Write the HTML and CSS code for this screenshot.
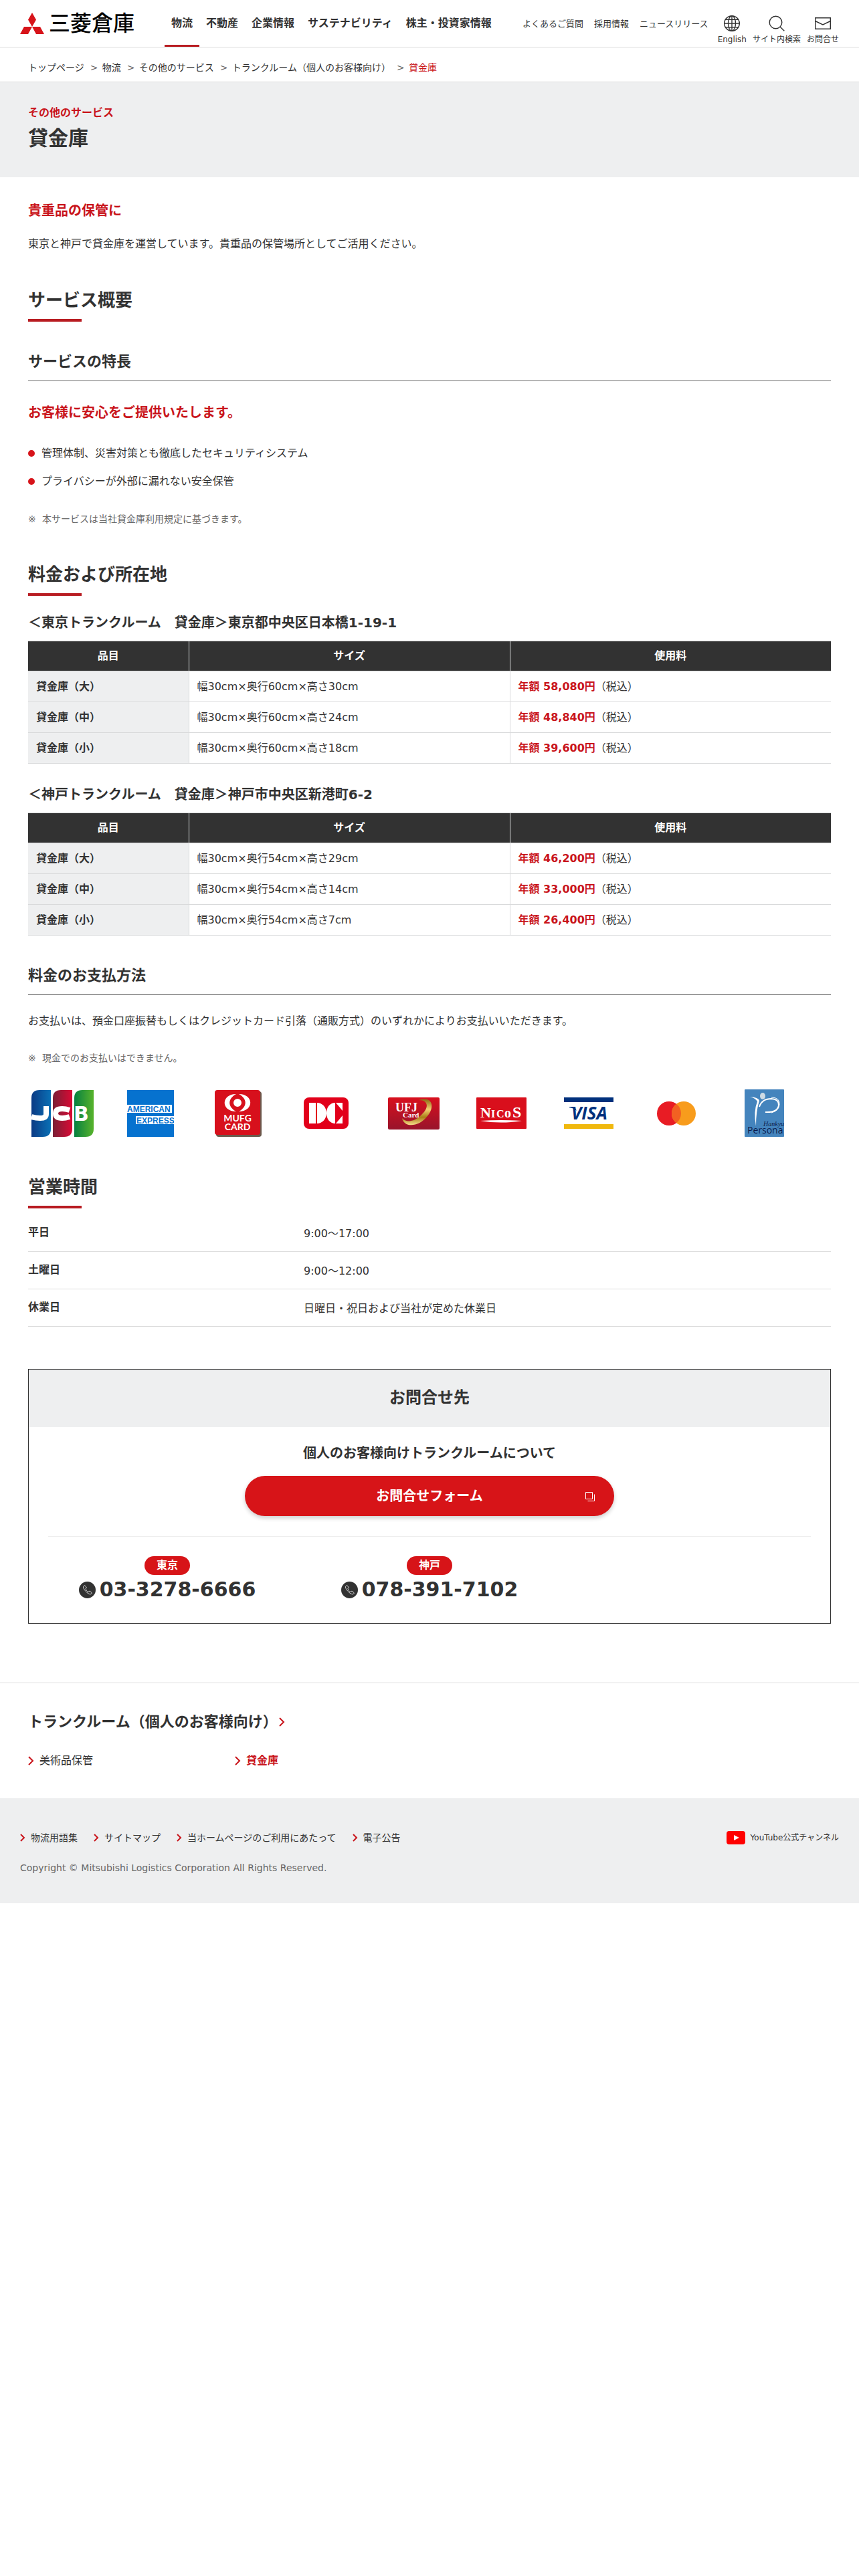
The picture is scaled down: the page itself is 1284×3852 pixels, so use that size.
FILE: index.html
```
<!DOCTYPE html>
<html lang="ja">

<head>
    <meta charset="UTF-8">
    <meta name="viewport" content="width=device-width, initial-scale=1.0">
    <title>貸金庫 | 三菱倉庫</title>
    <link rel="stylesheet" href="styles.css">
</head>

<body>
<header class="header">
    <a class="logo" href="#">
        <svg width="36" height="32" viewBox="0 0 36 32" aria-hidden="true">
            <path fill="#d7141a" d="M18 0l6 10.500-6 10.500-6-10.500zM6 21h12l-6 11H0zM18 21h12l6 11H24z"/>
        </svg>
        <span>三菱倉庫</span>
    </a>
    <nav class="main-nav">
        <a class="active" href="#">物流</a>
        <a href="#">不動産</a>
        <a href="#">企業情報</a>
        <a href="#">サステナビリティ</a>
        <a href="#">株主・投資家情報</a>
    </nav>
    <div class="header-side">
        <nav class="sub-nav">
            <a href="#">よくあるご質問</a>
            <a href="#">採用情報</a>
            <a href="#">ニュースリリース</a>
        </nav>
        <div class="tools">
            <a href="#">
                <svg class="line-icon" width="24" height="24" viewBox="0 0 24 24" aria-hidden="true">
                    <circle cx="12" cy="12" r="11.300"/>
                    <ellipse cx="12" cy="12" rx="5.500" ry="11.300"/>
                    <path d="M12 .7v22.600M.7 12h22.600M2.500 6.200h19M2.500 17.800h19"/>
                </svg>
                English
            </a>
            <a href="#">
                <svg class="line-icon" width="24" height="24" viewBox="0 0 24 24" aria-hidden="true">
                    <circle cx="10.500" cy="10.500" r="9.300"/>
                    <path d="M17 17l6.300 6.300"/>
                </svg>
                サイト内検索
            </a>
            <a href="#">
                <svg class="line-icon" width="24" height="24" viewBox="0 0 24 24" aria-hidden="true">
                    <path d="M.7 3.700h22.600v16.600H.7zM.7 8.500L12 14l11.300-5.500"/>
                </svg>
                お問合せ
            </a>
        </div>
    </div>
</header>

<nav class="breadcrumb">
    <a href="#">トップページ</a>
    <a href="#">物流</a>
    <a href="#">その他のサービス</a>
    <a href="#">トランクルーム（個人のお客様向け）</a>
    <span class="current">貸金庫</span>
</nav>

<div class="page-title">
    <p>その他のサービス</p>
    <h1>貸金庫</h1>
</div>

<main class="main">
    <p class="lead">貴重品の保管に</p>
    <p class="intro">東京と神戸で貸金庫を運営しています。貴重品の保管場所としてご活用ください。</p>

    <h2>サービス概要</h2>
    <h3>サービスの特長</h3>
    <p class="lead feature">お客様に安心をご提供いたします。</p>
    <ul class="bullets">
        <li>管理体制、災害対策とも徹底したセキュリティシステム</li>
        <li>プライバシーが外部に漏れない安全保管</li>
    </ul>
    <p class="note"><span>※</span>本サービスは当社貸金庫利用規定に基づきます。</p>

    <h2>料金および所在地</h2>
    <h4>＜東京トランクルーム　貸金庫＞東京都中央区日本橋1-19-1</h4>
    <table class="price">
        <thead>
        <tr><th>品目</th><th>サイズ</th><th>使用料</th></tr>
        </thead>
        <tbody>
        <tr><th>貸金庫（大）</th><td>幅30cm×奥行60cm×高さ30cm</td><td><b>年額 58,080円</b>（税込）</td></tr>
        <tr><th>貸金庫（中）</th><td>幅30cm×奥行60cm×高さ24cm</td><td><b>年額 48,840円</b>（税込）</td></tr>
        <tr><th>貸金庫（小）</th><td>幅30cm×奥行60cm×高さ18cm</td><td><b>年額 39,600円</b>（税込）</td></tr>
        </tbody>
    </table>

    <h4>＜神戸トランクルーム　貸金庫＞神戸市中央区新港町6-2</h4>
    <table class="price">
        <thead>
        <tr><th>品目</th><th>サイズ</th><th>使用料</th></tr>
        </thead>
        <tbody>
        <tr><th>貸金庫（大）</th><td>幅30cm×奥行54cm×高さ29cm</td><td><b>年額 46,200円</b>（税込）</td></tr>
        <tr><th>貸金庫（中）</th><td>幅30cm×奥行54cm×高さ14cm</td><td><b>年額 33,000円</b>（税込）</td></tr>
        <tr><th>貸金庫（小）</th><td>幅30cm×奥行54cm×高さ7cm</td><td><b>年額 26,400円</b>（税込）</td></tr>
        </tbody>
    </table>

    <h3>料金のお支払方法</h3>
    <p class="payment">お支払いは、預金口座振替もしくはクレジットカード引落（通販方式）のいずれかによりお支払いいただきます。</p>
    <p class="note"><span>※</span>現金でのお支払いはできません。</p>

    <ul class="cards">
        <li>
            <!-- JCB -->
            <svg width="94" height="70" viewBox="0 0 94 70">
                <defs>
                    <linearGradient id="jcb-blue"><stop offset="0" stop-color="#0b3a84"/><stop offset="1" stop-color="#0a70b5"/></linearGradient>
                    <linearGradient id="jcb-red"><stop offset="0" stop-color="#7a1f35"/><stop offset="1" stop-color="#d90a35"/></linearGradient>
                    <linearGradient id="jcb-green"><stop offset="0" stop-color="#068040"/><stop offset="1" stop-color="#58b32c"/></linearGradient>
                </defs>
                <path fill="url(#jcb-blue)" d="M12 0h17v58q0 12-12 12H0V12Q0 0 12 0z"/>
                <path fill="url(#jcb-red)" d="M44 0h17v58q0 12-12 12H32V12Q32 0 44 0z"/>
                <path fill="url(#jcb-green)" d="M76 0h17v58q0 12-12 12H64V12Q64 0 76 0z"/>
                <path fill="none" stroke="#fff" stroke-width="8" d="M22 24v12q0 6-9 6-7 0-13-2"/>
                <path fill="none" stroke="#fff" stroke-width="8" d="M57 30q-6-2-11-2-10 0-10 7t10 7q5 0 11-2"/>
                <text x="63" y="46" font-size="30" font-weight="bold" fill="#fff">B</text>
            </svg>
        </li>
        <li>
            <!-- American Express -->
            <svg width="70" height="70" viewBox="0 0 70 70">
                <path fill="#0672cf" d="M0 0h70v70H0z"/>
                <path fill="#fff" d="M0 22h67v12H0zM13 39h57v12H13z"/>
                <text class="amex" x="0" y="33" font-size="12">AMERICAN</text>
                <text class="amex" x="14" y="50" font-size="12">EXPRESS</text>
            </svg>
        </li>
        <li>
            <!-- MUFG CARD -->
            <svg width="70" height="70" viewBox="0 0 70 70">
                <rect x="2" y="2" width="68" height="68" rx="4" fill="#6b5a4d"/>
                <rect width="68" height="67" rx="4" fill="#d7101c"/>
                <path fill="#fff" d="M32 6C9 6 9 32 32 32 19 25 19 13 32 6zM36 6c23 0 23 26 0 26 13-7 13-19 0-26z"/>
                <circle cx="34" cy="19" r="6" fill="#fff"/>
                <g fill="#fff" font-family="Lato" font-weight="bold" font-size="14" text-anchor="middle">
                    <text x="34" y="47">MUFG</text>
                    <text x="34" y="60">CARD</text>
                </g>
            </svg>
        </li>
        <li>
            <!-- DC -->
            <svg width="67" height="47" viewBox="0 0 67 47">
                <rect width="67" height="47" rx="8" fill="#e2001a"/>
                <path fill="#fff" d="M8 8h10v31H8zM20 8c8 0 14 7 14 15.500S28 39 20 39zM58 8v12L48 8zM58 39V27L48 39zM47 8v31c-8 0-13-7-13-15.500S39 8 47 8z"/>
            </svg>
        </li>
        <li>
            <!-- UFJ Card -->
            <svg width="77" height="48" viewBox="0 0 77 48">
                <defs>
                    <linearGradient id="ufj-bg" x2="0" y2="1"><stop offset="0" stop-color="#d8101e"/><stop offset="1" stop-color="#98142b"/></linearGradient>
                    <linearGradient id="ufj-gold" x2="0" y2="1"><stop offset="0" stop-color="#8d6712"/><stop offset=".4" stop-color="#f3cf72"/><stop offset=".7" stop-color="#a97c16"/><stop offset="1" stop-color="#f7dc8a"/></linearGradient>
                </defs>
                <rect width="77" height="48" rx="2" fill="url(#ufj-bg)"/>
                <path fill="url(#ufj-gold)" d="M46 4c22-7 24 12 12 25-12 15-34 17-37 2 6 7 18 6 29-5C62 15 60 4 46 4z"/>
                <text x="11" y="21" font-family="Liberation Serif" font-size="18" font-weight="bold" fill="#fff">UFJ</text>
                <text x="22" y="30" font-family="Liberation Serif" font-size="11" font-weight="bold" fill="#fff">Card</text>
            </svg>
        </li>
        <li>
            <!-- NICOS -->
            <svg width="75" height="47" viewBox="0 0 75 47">
                <rect width="75" height="47" rx="1" fill="#d90f1c"/>
                <g fill="#fff" font-family="Liberation Serif" font-weight="bold">
                    <text x="6" y="30" font-size="22">N</text>
                    <text x="22 30 42" y="30" font-size="16">IC<tspan font-size="20">o</tspan></text>
                    <text x="54" y="30" font-size="24">S</text>
                </g>
                <path fill="#fff" d="M6 35q31-2 62 0-31 5-62 0z"/>
            </svg>
        </li>
        <li>
            <!-- VISA -->
            <svg width="74" height="47" viewBox="0 0 74 47">
                <path fill="#00307c" d="M0 0h74v7H0z"/>
                <path fill="#f0b80e" d="M0 40h74v7H0z"/>
                <text x="11" y="33" font-family="Open Sans" font-size="26" font-weight="bold" font-style="italic" fill="#00307c">VISA</text>
                <path fill="#00307c" d="M8 14h8l3 6q-4-4-11-5z"/>
            </svg>
        </li>
        <li>
            <!-- Mastercard -->
            <svg width="58" height="36" viewBox="0 0 58 36">
                <circle cx="18" cy="18" r="18" fill="#e81c24"/>
                <circle cx="40" cy="18" r="18" fill="#f89c1c"/>
                <path fill="#f26122" d="M29 3.750a18 18 0 0 1 0 28.500 18 18 0 0 1 0-28.500z"/>
            </svg>
        </li>
        <li>
            <!-- Hankyu Persona -->
            <svg width="59" height="71" viewBox="0 0 59 71">
                <rect width="59" height="71" rx="1" fill="#4484bd"/>
                <ellipse cx="27" cy="10" rx="4" ry="5" fill="#cfdbe4"/>
                <path fill="#fff" d="M8 11q13 1 14 6-5 15-5 38-4-22 2-37-3-5-11-7z"/>
                <path fill="none" stroke="#fff" stroke-width="2" d="M22 26q4-12 18-12 12 1 11 10-2 11-20 10"/>
                <path fill="none" stroke="#fff" d="M40 12q13 0 12 11-1 9-12 12"/>
                <g fill="#0b1c4d">
                    <text x="28" y="55" font-size="10" font-style="italic" font-family="Liberation Serif">Hankyu</text>
                    <text x="4" y="66" font-size="14" font-family="Open Sans">Persona</text>
                </g>
            </svg>
        </li>
    </ul>

    <h2>営業時間</h2>
    <dl class="hours">
        <div><dt>平日</dt><dd>9:00～17:00</dd></div>
        <div><dt>土曜日</dt><dd>9:00～12:00</dd></div>
        <div><dt>休業日</dt><dd>日曜日・祝日および当社が定めた休業日</dd></div>
    </dl>

    <section class="contact">
        <h2 class="contact-title">お問合せ先</h2>
        <div class="contact-body">
            <p class="contact-lead">個人のお客様向けトランクルームについて</p>
            <a class="contact-btn" href="#">
                お問合せフォーム
                <svg width="15" height="15" viewBox="0 0 15 15" aria-hidden="true">
                    <path fill="none" stroke="#fff" d="M.5.5h10v10H.5zM13.500 3.500v10h-10"/>
                </svg>
            </a>
            <div class="phones">
                <div class="phone">
                    <span class="area">東京</span>
                    <a href="tel:03-3278-6666">
                        <svg width="25" height="25" viewBox="0 0 25 25" aria-hidden="true">
                            <circle cx="12.500" cy="12.500" r="12.500" fill="#323232"/>
                            <path fill="none" stroke="#fff" stroke-width=".8" d="M8.500 5.500l-2 2c-1 3 7 12 11 11.500l2-2-3.500-3-2 1.500c-2-1-3.500-3-4-5l1.500-1.500z"/>
                        </svg>
                        03-3278-6666
                    </a>
                </div>
                <div class="phone">
                    <span class="area">神戸</span>
                    <a href="tel:078-391-7102">
                        <svg width="25" height="25" viewBox="0 0 25 25" aria-hidden="true">
                            <circle cx="12.500" cy="12.500" r="12.500" fill="#323232"/>
                            <path fill="none" stroke="#fff" stroke-width=".8" d="M8.500 5.500l-2 2c-1 3 7 12 11 11.500l2-2-3.500-3-2 1.500c-2-1-3.500-3-4-5l1.500-1.500z"/>
                        </svg>
                        078-391-7102
                    </a>
                </div>
            </div>
        </div>
    </section>
</main>

<nav class="local-nav">
    <a class="local-title" href="#">
        トランクルーム（個人のお客様向け）
        <svg class="chevron" width="9" height="14" viewBox="0 0 9 14" aria-hidden="true"><path d="M1 1l6 6-6 6"/></svg>
    </a>
    <ul>
        <li>
            <a href="#"><svg class="chevron" width="9" height="14" viewBox="0 0 9 14" aria-hidden="true"><path d="M1 1l6 6-6 6"/></svg>美術品保管</a>
        </li>
        <li>
            <a class="current" href="#"><svg class="chevron" width="9" height="14" viewBox="0 0 9 14" aria-hidden="true"><path d="M1 1l6 6-6 6"/></svg>貸金庫</a>
        </li>
    </ul>
</nav>

<footer class="footer">
    <div class="footer-top">
        <ul class="footer-links">
            <li><a href="#"><svg class="chevron" width="8" height="12" viewBox="0 0 8 12" aria-hidden="true"><path d="M1 1l5 5-5 5"/></svg>物流用語集</a></li>
            <li><a href="#"><svg class="chevron" width="8" height="12" viewBox="0 0 8 12" aria-hidden="true"><path d="M1 1l5 5-5 5"/></svg>サイトマップ</a></li>
            <li><a href="#"><svg class="chevron" width="8" height="12" viewBox="0 0 8 12" aria-hidden="true"><path d="M1 1l5 5-5 5"/></svg>当ホームページのご利用にあたって</a></li>
            <li><a href="#"><svg class="chevron" width="8" height="12" viewBox="0 0 8 12" aria-hidden="true"><path d="M1 1l5 5-5 5"/></svg>電子公告</a></li>
        </ul>
        <a class="youtube" href="#">
            <svg width="28" height="20" viewBox="0 0 28 20" aria-hidden="true">
                <rect width="28" height="20" rx="4" fill="#f00"/>
                <path fill="#fff" d="M11 6l8 4-8 4z"/>
            </svg>
            YouTube公式チャンネル
        </a>
    </div>
    <p class="copyright">Copyright © Mitsubishi Logistics Corporation All Rights Reserved.</p>
</footer>
</body>

</html>
```
FILE: styles.css
```
* {
    box-sizing: border-box;
}

body {
    margin: 0;
    background-color: #fff;
    color: #323232;
    font-family: "DejaVu Sans", "Noto Sans CJK JP", sans-serif;
    font-size: 16px;
    line-height: 28px;
}

h1, h2, h3, h4, p, ul, dl, dd {
    margin: 0;
    padding: 0;
}

ul {
    list-style: none;
}

a {
    color: inherit;
    text-decoration: none;
}

svg {
    display: block;
    flex: none;
}

/* header */
.header {
    display: flex;
    height: 71px;
    padding: 0 30px;
    border-bottom: 1px solid #ddd;
}

.logo {
    display: flex;
    align-items: center;
    gap: 7px;
    margin-right: 45px;
    color: #000;
    font-size: 32px;
    font-weight: 500;
    white-space: nowrap;
}

.main-nav {
    display: flex;
    font-weight: bold;
    white-space: nowrap;
}

.main-nav a {
    padding: 21px 10px 0;
    border-bottom: 3px solid transparent;
}

.main-nav .active {
    border-bottom-color: #b81c22;
}

.header-side {
    display: flex;
    gap: 14px;
    margin-left: auto;
    white-space: nowrap;
}

.sub-nav {
    display: flex;
    gap: 16px;
    padding-top: 22px;
    font-size: 13px;
}

.tools {
    display: flex;
    gap: 9px;
    padding-top: 23px;
    font-size: 12px;
    line-height: 24px;
}

.tools a {
    display: flex;
    flex-direction: column;
    align-items: center;
}

.line-icon {
    fill: none;
    stroke: #323232;
    stroke-width: 1.4;
}

/* breadcrumb */
.breadcrumb {
    display: flex;
    padding: 20px 42px 10px;
    border-bottom: 1px solid #ddd;
    font-size: 14px;
    line-height: 21px;
}

.breadcrumb a::after {
    content: ">";
    display: inline-block;
    width: 18px;
    padding-left: 9px;
    color: #666;
}

.current {
    color: #c9151c;
}

.page-title {
    padding: 34px 42px 37px;
    background-color: #eeeff0;
}

.page-title p {
    color: #c9151c;
    font-weight: bold;
    line-height: 24px;
}

.page-title h1 {
    margin-top: 5px;
    font-size: 30px;
    line-height: 42px;
}

/* main */
.main {
    padding: 35px 42px 0;
}

.lead {
    color: #c9151c;
    font-size: 20px;
    font-weight: bold;
    line-height: 30px;
}

.intro {
    margin: 21px 0 51px;
}

h2 {
    font-size: 26px;
    line-height: 38px;
}

h2::after {
    content: "";
    display: block;
    width: 80px;
    height: 4px;
    margin-top: 9px;
    background-color: #b81c22;
}

h3 {
    margin-top: 44px;
    padding-bottom: 12px;
    border-bottom: 1px solid #666;
    font-size: 22px;
    line-height: 32px;
}

h4 {
    margin: 25px 0 12px;
    font-size: 20px;
    line-height: 30px;
}

.feature {
    margin-top: 32px;
}

.bullets {
    margin: 32px 0 31px;
}

.bullets li {
    display: flex;
    align-items: center;
    gap: 10px;
}

.bullets li + li {
    margin-top: 14px;
}

.bullets li::before {
    content: "";
    width: 10px;
    height: 10px;
    border-radius: 50%;
    background-color: #d7141a;
}

.note {
    display: flex;
    margin-bottom: 53px;
    color: #666;
    font-size: 14px;
    line-height: 22px;
}

.note span {
    width: 21px;
}

/* price table */
.price {
    width: 100%;
    border-collapse: collapse;
    table-layout: fixed;
}

.price + h4 {
    margin-top: 31px;
}

.price th,
.price td {
    padding: 10px 12px;
    border: 1px solid #d9dadb;
    text-align: left;
    line-height: 25px;
}

.price tr > :first-child {
    width: 20%;
    border-left: none;
}

.price tr > :last-child {
    border-right: none;
}

.price thead th {
    background-color: #323232;
    color: #fff;
    text-align: center;
    line-height: 24px;
}

.price tbody th {
    background-color: #eeeff0;
}

.price b {
    color: #c9151c;
}

.payment {
    margin: 25px 0 30px;
}

.payment + .note {
    margin-bottom: 36px;
}

/* card logos */
.cards {
    display: grid;
    grid-template-columns: repeat(9, 1fr);
    gap: 27px;
    align-items: center;
    justify-items: center;
    height: 70px;
    margin-bottom: 57px;
    padding-right: 48px;
}

.amex {
    fill: #0672cf;
    font-family: "Liberation Sans", sans-serif;
    font-weight: bold;
}

/* business hours */
.hours {
    margin-top: 9px;
}

.hours div {
    display: grid;
    grid-template-columns: 33% 1fr;
    gap: 16px;
    padding: 15px 0 12px;
    border-bottom: 1px solid #ddd;
}

.hours dt {
    font-weight: bold;
    line-height: 24px;
}

/* contact */
.contact {
    margin-top: 63px;
    border: 1px solid #323232;
}

.contact-title {
    padding: 24px 0 26px;
    background-color: #eeeff0;
    font-size: 24px;
    line-height: 36px;
    text-align: center;
}

.contact-title::after {
    display: none;
}

.contact-body {
    padding: 24px 29px 30px;
}

.contact-lead {
    font-size: 20px;
    font-weight: bold;
    line-height: 30px;
    text-align: center;
}

.contact-btn {
    position: relative;
    display: block;
    max-width: 552px;
    margin: 19px auto 30px;
    border-radius: 30px;
    background-color: #d71418;
    box-shadow: 0 3px 6px rgba(0, 0, 0, 0.2);
    color: #fff;
    font-size: 20px;
    font-weight: bold;
    line-height: 60px;
    text-align: center;
}

.contact-btn svg {
    position: absolute;
    top: 24px;
    right: 28px;
}

.phones {
    display: grid;
    grid-template-columns: repeat(3, 1fr);
    gap: 36px;
    padding-top: 29px;
    border-top: 1px solid #eee;
}

.phone {
    display: flex;
    flex-direction: column;
    align-items: center;
}

.area {
    padding: 0 18px;
    border-radius: 14px;
    background-color: #d71418;
    color: #fff;
    font-weight: bold;
}

.phone a {
    display: flex;
    align-items: center;
    gap: 6px;
    margin-top: 2px;
    font-size: 30px;
    font-weight: bold;
    line-height: 40px;
}

/* local navigation */
.chevron {
    fill: none;
    stroke: #c9151c;
    stroke-width: 2;
}

.local-nav {
    margin-top: 88px;
    padding: 42px;
    border-top: 1px solid #ddd;
}

.local-title {
    display: flex;
    align-items: center;
    gap: 2px;
    font-size: 22px;
    font-weight: bold;
    line-height: 32px;
}

.local-nav ul {
    display: grid;
    grid-template-columns: repeat(4, 1fr);
    gap: 36px;
    margin-top: 28px;
}

.local-nav li a {
    display: flex;
    align-items: center;
    gap: 8px;
}

.local-nav .current {
    font-weight: bold;
}

/* footer */
.footer {
    padding: 48px 30px 42px;
    background-color: #eeeff0;
    font-size: 14px;
    line-height: 22px;
}

.footer-top,
.footer-links,
.footer-links a,
.youtube {
    display: flex;
    align-items: center;
}

.footer-top {
    justify-content: space-between;
}

.footer-links {
    gap: 24px;
}

.footer-links a,
.youtube {
    gap: 8px;
}

.youtube {
    font-size: 12px;
}

.copyright {
    margin-top: 23px;
    color: #666;
}
```
